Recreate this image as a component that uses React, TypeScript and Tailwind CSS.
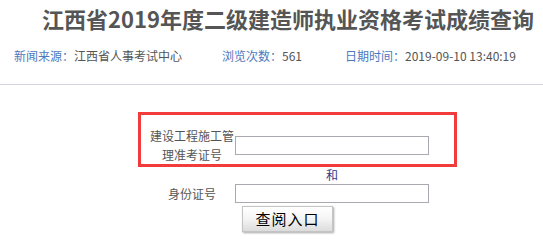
export default function App() {
  return (
    <div
      className="w-[543px] h-[246px] overflow-hidden bg-white text-[#555]"
      style={{ fontFamily: '"Microsoft YaHei", "Noto Sans CJK SC", "Noto Sans", sans-serif' }}
    >
      {/* 标题 */}
      <h1 className="pl-[42px] pt-[2px] text-[22px] font-bold leading-[32px] whitespace-nowrap text-[#555]">
        江西省2019年度二级建造师执业资格考试成绩查询
      </h1>

      {/* 信息栏 */}
      <div className="mt-[13px] flex pl-[14px] text-[12px] leading-[18px] whitespace-nowrap">
        <span className="w-[208px]">
          <span className="text-[#4d78bd]">新闻来源：</span>江西省人事考试中心
        </span>
        <span className="w-[123px]">
          <span className="text-[#4d78bd]">浏览次数：</span>561
        </span>
        <span>
          <span className="text-[#4d78bd]">日期时间：</span>2019-09-10 13:40:19
        </span>
      </div>

      <div className="mt-[19px] h-[1px] bg-[#d3d3db]" />

      {/* 查询表单 */}
      <div className="mt-[27px] ml-[138px] h-[55px] w-[319px] border-[3px] border-[#f23b3b] pt-[11px] pl-[8px]">
        <div className="flex items-center">
          <div className="w-[86px] text-center text-[12px] leading-[19px]">
            建设工程施工管
            <br />
            理准考证号
          </div>
          <input type="text" className="h-[19px] w-[194px] border border-[#a9a9b1] bg-white outline-none" />
        </div>
      </div>

      <div className="ml-[235px] w-[194px] text-center text-[12px] leading-[16px] text-[#2e3a8c]">和</div>

      <div className="mt-[1px] ml-[149px] flex items-center">
        <div className="w-[86px] text-center text-[12px] leading-[16px]">身份证号</div>
        <input type="text" className="h-[19px] w-[194px] border border-[#a9a9b1] bg-white outline-none" />
      </div>

      <button
        type="button"
        className="mt-[3px] ml-[242px] h-[26px] w-[91px] border border-[#c4c4c4] bg-gradient-to-b from-white via-[#f4f4f4] to-[#dcdcdc] text-[15px] leading-[24px] tracking-[1px] text-black shadow-[1px_1px_2px_rgba(0,0,0,0.35)]"
      >
        查阅入口
      </button>
    </div>
  );
}
